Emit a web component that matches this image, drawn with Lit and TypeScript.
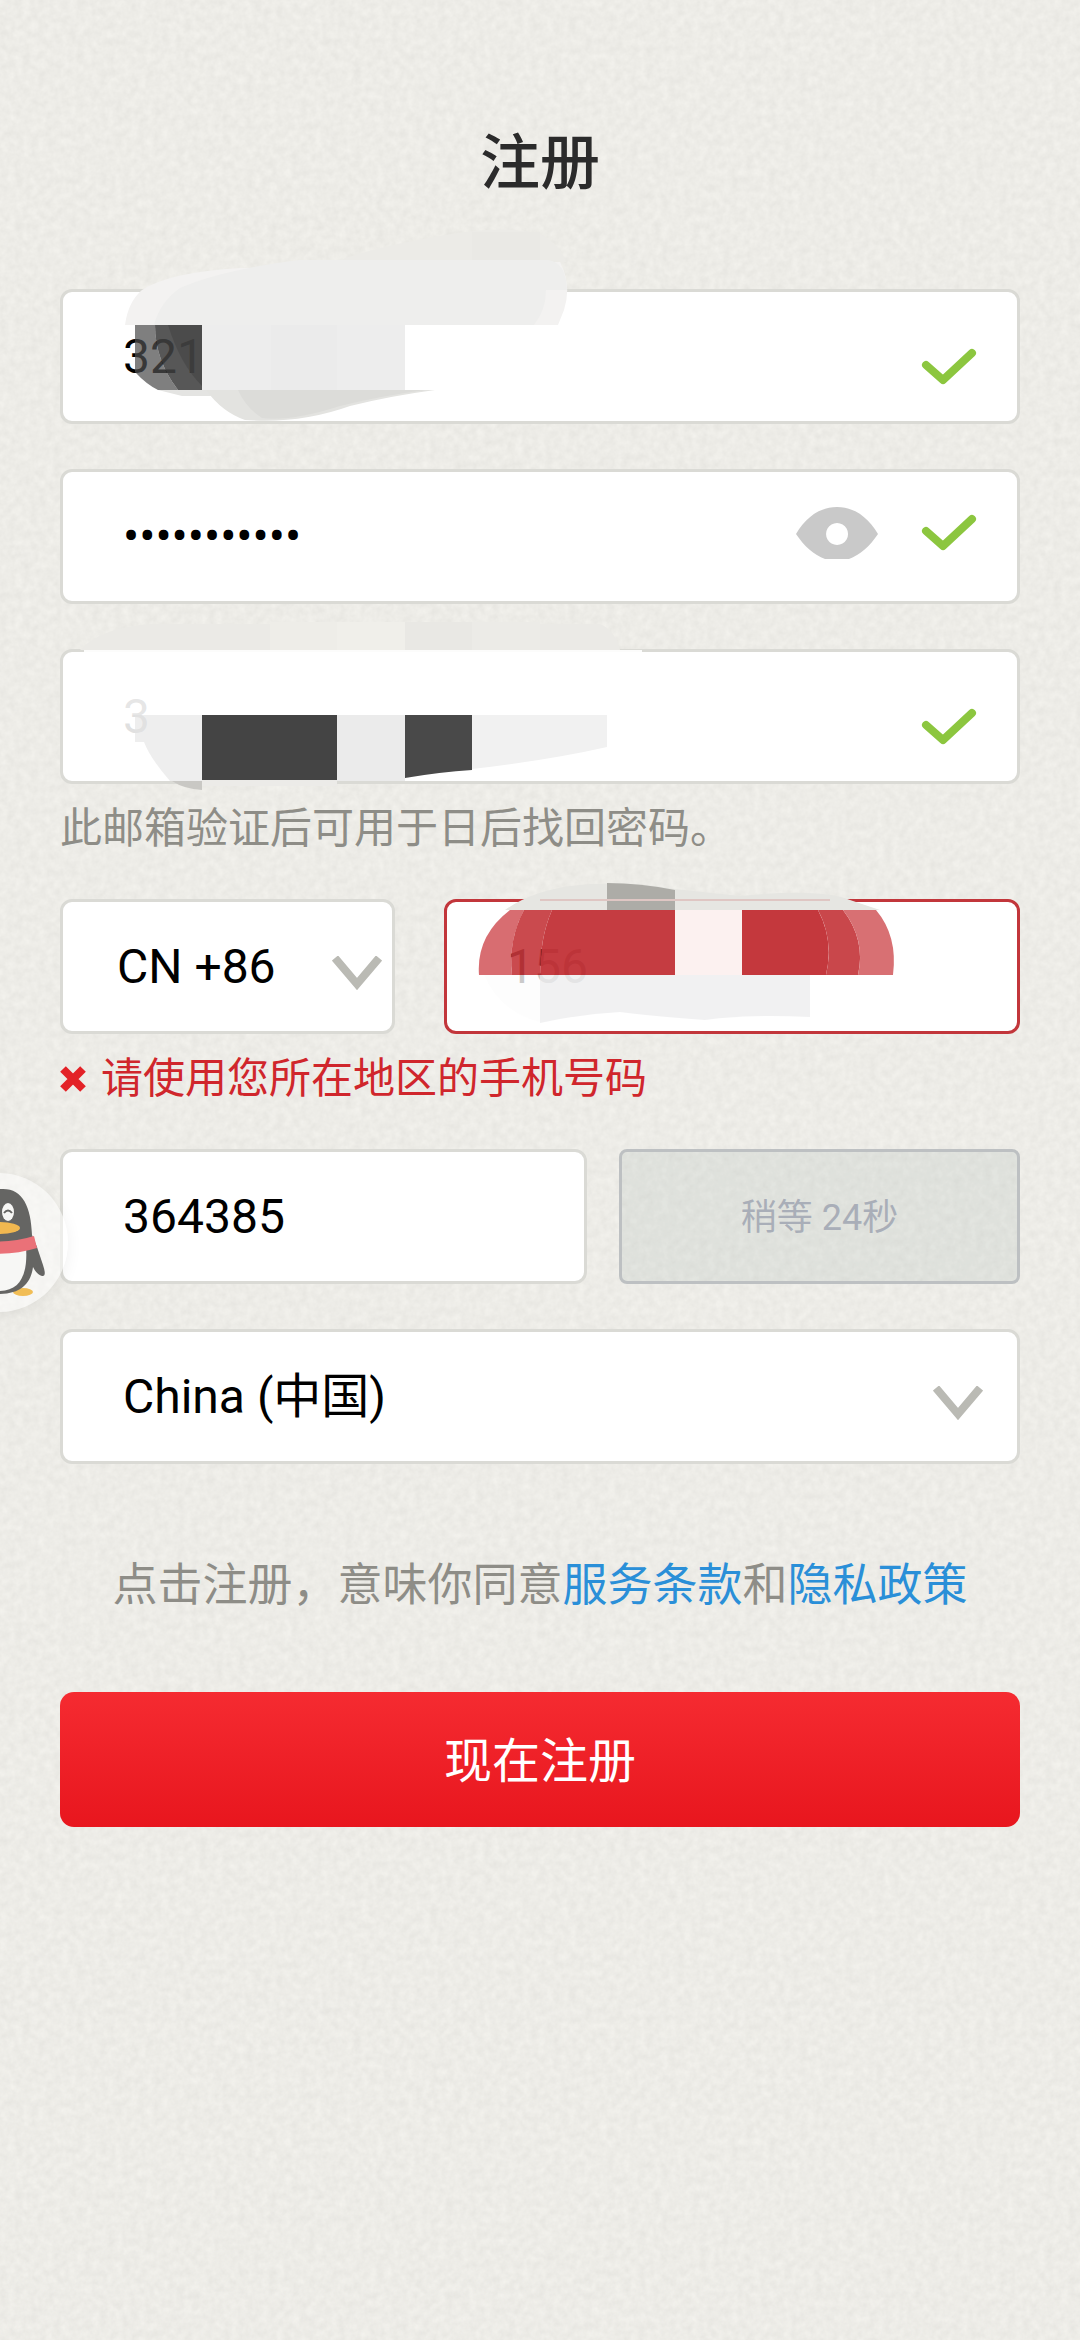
import { LitElement, html, css, svg } from 'lit';
import { customElement, state } from 'lit/decorators.js';

const check = html`
  <svg class="check" viewBox="0 0 56 38" aria-hidden="true">
    <path d="M5 17 L22 32 L51 5" />
  </svg>
`;

const chevron = html`
  <svg class="chevron" viewBox="0 0 50 34" aria-hidden="true">
    <path d="M3 2 L25 28 L47 2" />
  </svg>
`;

const accountSmudge = svg`
  <path fill="#ecebe7" d="M340 260 Q380 246 440 236 Q500 224 540 234 Q560 244 566 262 Z" />
  <rect fill="#eae9e5" x="472" y="232" width="68" height="28" />
  <path fill="#f3f2f1" d="M125 325 Q128 302 142 290 Q170 272 240 268 L560 262 Q572 285 564 310 L558 325 Z" />
  <path fill="#eeeeed" d="M154 325 Q160 302 180 288 Q220 270 300 260 H548 Q566 262 567 290 H546 Q546 310 534 325 Z" />
  <path fill="#4e4e4e" fill-opacity="0.72" d="M135 325 H155 Q155 360 178 390 H158 Q146 384 135 372 Z" />
  <path fill="#404040" fill-opacity="0.88" d="M155 325 H202 V390 H178 Q155 360 155 325 Z" />
  <path fill="#404040" fill-opacity="0.5" d="M168 325 H202 V386 Q180 364 168 325 Z" />
  <path fill="#e4e4e2" d="M158 390 H208 L214 396 H182 Z" />
  <rect fill="#ededed" x="202" y="325" width="203" height="65" />
  <rect fill="#ebebeb" x="271" y="325" width="66" height="65" />
  <path fill="#e3e3e0" d="M206 390 H435 Q390 396 350 406 Q300 424 245 420 Q222 412 206 390 Z" />
  <path fill="#dcdcd9" d="M238 390 H425 Q380 396 340 406 Q290 422 262 418 Q246 408 238 390 Z" />
`;

const emailSmudge = svg`
  <path fill="#ebeae6" d="M80 650 Q100 628 150 624 H600 Q615 630 620 650 Z" />
  <rect fill="#eeede8" x="270" y="622" width="67" height="28" />
  <rect fill="#f0efea" x="337" y="622" width="68" height="28" />
  <rect fill="#e9e8e4" x="405" y="622" width="67" height="28" />
  <rect fill="#ecebe7" x="472" y="622" width="68" height="28" />
  <path fill="#fff" fill-opacity="0.9" d="M84 650 H642 V715 H84 Z" />
  <path fill="#fff" fill-opacity="0.88" d="M90 715 H135 V742 H100 Z" />
  <path fill="#ededed" fill-opacity="0.95" d="M135 715 H202 V781 H170 Q150 758 144 742 H135 Z" />
  <path fill="#c9c8c4" d="M172 781 H202 V790 Q184 789 172 781 Z" />
  <rect fill="#ecebe8" x="202" y="780" width="135" height="6" />
  <rect fill="#444" x="202" y="715" width="135" height="65" />
  <rect fill="#ebebeb" x="337" y="715" width="68" height="66" />
  <path fill="#494949" d="M405 715 H472 V770 Q440 772 405 778 Z" />
  <path fill="#f1f1f1" d="M472 715 H607 V747 Q550 760 472 769 Z" />
`;

const phoneSmudge = svg`
  <path fill="#e6e6e2" d="M505 910 Q530 892 570 886 Q620 880 675 889 L740 896 Q820 888 850 900 L880 910 Z" />
  <path fill="#adaca7" d="M607 883 Q640 883 675 890 V910 H607 Z" />
  <path stroke="#dfc6c3" stroke-width="2" d="M540 900 H830" />
  <path fill="#cf4d52" fill-opacity="0.82" d="M510 910 H524 Q508 940 512 975 H479 Q476 936 510 910 Z" />
  <path fill="#c4363b" fill-opacity="0.9" d="M524 910 H552 Q539 940 541 975 H512 Q508 940 524 910 Z" />
  <path fill="#c3363b" fill-opacity="0.97" d="M552 910 H675 V975 H541 Q539 940 552 910 Z" />
  <rect fill="#fcf1f0" x="675" y="910" width="67" height="65" />
  <path fill="#c4383d" d="M742 910 H818 Q834 940 826 975 H742 Z" />
  <path fill="#c9474b" d="M818 910 H843 Q866 940 858 975 H826 Q834 940 818 910 Z" />
  <path fill="#d87073" d="M843 910 H876 Q898 936 893 975 H858 Q866 940 843 910 Z" />
  <path fill="#fcfcfc" fill-opacity="0.8" d="M484 975 H540 V1022 Q500 1012 484 975 Z" />
  <path fill="#f0f0f1" fill-opacity="0.95" d="M540 975 H810 V1017 Q750 1014 705 1020 Q650 1016 620 1012 Q580 1014 540 1023 Z" />
`;

@customElement('app-root')
export class AppRoot extends LitElement {
  static override styles = css`
    :host {
      display: block;
      position: relative;
      box-sizing: border-box;
      min-height: 100vh;
      padding: 128px 60px 60px;
      overflow: hidden;
      background: #edece7;
      font-family: Roboto, 'Noto Sans CJK SC', sans-serif;
      color: #000;
    }

    * {
      box-sizing: border-box;
    }

    .paper {
      position: absolute;
      inset: 0;
      width: 100%;
      height: 100%;
    }

    h1 {
      position: relative;
      margin: 0 0 89px;
      font-size: 60px;
      font-weight: 500;
      line-height: 72px;
      text-align: center;
      color: #2b2b2b;
    }

    form {
      position: relative;
      display: flex;
      flex-direction: column;
      gap: 45px;
    }

    .field {
      position: relative;
      display: flex;
      align-items: center;
      min-width: 0;
      height: 135px;
      border: 3px solid #dadad5;
      border-radius: 12px;
      background: #fff;
    }

    .field input,
    .field select {
      flex: 1;
      min-width: 0;
      height: 100%;
      padding: 0 0 0 60px;
      border: 0;
      outline: 0;
      background: none;
      appearance: none;
      font: inherit;
      font-size: 48px;
      color: #000;
    }

    .field.invalid {
      border-color: #c2363b;
    }

    .icons {
      display: flex;
      align-items: center;
      gap: 43px;
      padding: 20px 40px 0 0;
    }

    .secret .icons {
      padding: 0 40px 8px 0;
    }

    .check {
      width: 56px;
      height: 38px;
      fill: none;
      stroke: #8cc63f;
      stroke-width: 8;
      stroke-linecap: round;
      stroke-linejoin: round;
    }

    .reveal {
      display: flex;
      padding: 0;
      border: 0;
      background: none;
    }

    .reveal svg {
      width: 82px;
      height: 52px;
    }

    .chevron {
      position: absolute;
      right: 34px;
      top: 54px;
      width: 50px;
      height: 34px;
      fill: none;
      stroke: #babab4;
      stroke-width: 8;
      pointer-events: none;
    }

    .prefix .chevron {
      right: 10px;
    }

    .field.prefix select {
      padding-left: 54px;
    }

    .smudge {
      position: absolute;
      left: -3px;
      top: -3px;
      width: 600px;
      height: 135px;
      overflow: visible;
      fill: none;
      pointer-events: none;
    }

    .note {
      display: flex;
      align-items: center;
      gap: 15px;
      margin: 0;
      padding-top: 20px;
      font-size: 42px;
      line-height: 50px;
      color: #8e8d87;
    }

    .note.error {
      color: #d0262c;
    }

    .note svg {
      width: 26px;
      height: 26px;
      stroke: #e32227;
      stroke-width: 8;
    }

    .phone {
      display: grid;
      grid-template-columns: minmax(0, 335fr) minmax(0, 576fr);
      column-gap: 49px;
    }

    .phone .note {
      grid-column: 1 / -1;
    }

    .code {
      position: relative;
      display: grid;
      grid-template-columns: minmax(0, 527fr) minmax(0, 401fr);
      gap: 32px;
    }

    .wait {
      padding: 0 0 6px;
      border: 3px solid #bdc0c2;
      border-radius: 8px;
      background: rgba(170, 185, 180, 0.2);
      font: inherit;
      font-size: 36px;
      color: #a9aeb8;
    }

    .terms {
      margin: 0;
      padding: 43px 0 27px;
      font-size: 45px;
      line-height: 68px;
      text-align: center;
      color: #8e8d87;
    }

    .terms a {
      color: #2a8fd8;
      text-decoration: none;
    }

    .submit {
      height: 135px;
      padding: 0 0 6px;
      border: 0;
      border-radius: 14px;
      background: linear-gradient(#f52b31, #e8161e);
      font: inherit;
      font-size: 48px;
      color: #fff;
    }

    .buddy {
      position: absolute;
      left: -131px;
      top: 24px;
      width: 139px;
      height: 139px;
      padding: 0;
      border: 0;
      border-radius: 50%;
      background: rgba(255, 255, 255, 0.5);
      box-shadow: 0 4px 16px rgba(0, 0, 0, 0.06);
    }

    .buddy svg {
      display: block;
      width: 139px;
      height: 139px;
    }
  `;

  @state() private revealed = false;

  private toggleReveal() {
    this.revealed = !this.revealed;
  }

  private renderPaper() {
    return html`
      <svg class="paper" aria-hidden="true">
        <filter id="grain" x="0" y="0" width="100%" height="100%" color-interpolation-filters="sRGB">
          <feTurbulence type="fractalNoise" baseFrequency="0.13" numOctaves="3" seed="4" />
          <feColorMatrix
            values="0.06 0 0 0 0.899
                    0.06 0 0 0 0.895
                    0.06 0 0 0 0.876
                    0 0 0 0 1"
          />
        </filter>
        <rect width="100%" height="100%" filter="url(#grain)" />
      </svg>
    `;
  }

  private renderBuddy() {
    return html`
      <button class="buddy" type="button" aria-label="QQ">
        <svg viewBox="0 0 139 139" aria-hidden="true">
          <ellipse cx="94" cy="119" rx="10" ry="4" fill="#f1bd55" />
          <ellipse cx="46" cy="119" rx="10" ry="4" fill="#f1bd55" />
          <path
            fill="#656563"
            d="M74 16 C94 16 102 34 103 62 L108 74 L114 92 Q118 104 113 103 Q108 102 104 94 C102 110 92 121 70 121 C48 121 38 110 36 94 Q32 102 27 103 Q22 104 26 92 L37 62 C38 34 48 16 74 16 Z"
          />
          <path fill="#f7f7f5" d="M42 74 H97 C99 100 92 118 70 118 C48 118 41 100 42 74 Z" />
          <path fill="#ea7178" d="M35 63 Q70 74 105 63 L108 75 Q72 86 32 76 Z" />
          <ellipse cx="70" cy="55" rx="21" ry="6" fill="#f1b850" />
          <ellipse cx="79" cy="39" rx="6" ry="9" fill="#f7f7f5" />
          <ellipse cx="61" cy="39" rx="6" ry="9" fill="#f7f7f5" />
          <path d="M75 40 Q79 35 83 40" fill="none" stroke="#656563" stroke-width="2" />
        </svg>
      </button>
    `;
  }

  override render() {
    return html`
      ${this.renderPaper()}
      <h1>注册</h1>
      <form @submit=${(e: Event) => e.preventDefault()}>
        <div class="field">
          <input type="text" aria-label="帐号" value="321" />
          <svg class="smudge" viewBox="60 289 600 135" aria-hidden="true">${accountSmudge}</svg>
          <div class="icons">${check}</div>
        </div>

        <div class="field secret">
          <input type=${this.revealed ? 'text' : 'password'} aria-label="密码" value="abcdefghijk" />
          <div class="icons">
            <button class="reveal" type="button" aria-label="显示密码" @click=${this.toggleReveal}>
              <svg viewBox="0 0 82 52" aria-hidden="true">
                <path
                  fill="#c9c9c9"
                  fill-rule="evenodd"
                  d="M0 27 C10 10 24 0 41 0 C58 0 72 10 82 27 C74 39 64 48 53 52 H29 C18 48 8 39 0 27 Z M41 16 a11 11 0 1 0 0.1 0 Z"
                />
              </svg>
            </button>
            ${check}
          </div>
        </div>

        <div class="email">
          <div class="field">
            <input type="text" aria-label="邮箱" value="3" />
            <svg class="smudge" viewBox="60 649 600 135" aria-hidden="true">${emailSmudge}</svg>
            <div class="icons">${check}</div>
          </div>
          <p class="note">此邮箱验证后可用于日后找回密码。</p>
        </div>

        <div class="phone">
          <div class="field prefix">
            <select aria-label="区号">
              <option>CN +86</option>
            </select>
            ${chevron}
          </div>
          <div class="field invalid">
            <input type="tel" aria-label="手机号码" value="156" aria-invalid="true" />
            <svg class="smudge" viewBox="444 899 600 135" aria-hidden="true">${phoneSmudge}</svg>
          </div>
          <p class="note error">
            <svg viewBox="0 0 26 26" aria-hidden="true"><path d="M3 3 L23 23 M23 3 L3 23" /></svg>
            请使用您所在地区的手机号码
          </p>
        </div>

        <div class="code">
          <div class="field">
            <input type="text" inputmode="numeric" aria-label="验证码" value="364385" />
          </div>
          <button class="wait" type="button" disabled>稍等 24秒</button>
          ${this.renderBuddy()}
        </div>

        <div class="field">
          <select aria-label="国家">
            <option>China (中国)</option>
          </select>
          ${chevron}
        </div>

        <p class="terms">
          点击注册，意味你同意<a href="#">服务条款</a>和<a href="#">隐私政策</a>
        </p>

        <button class="submit" type="submit">现在注册</button>
      </form>
    `;
  }
}
